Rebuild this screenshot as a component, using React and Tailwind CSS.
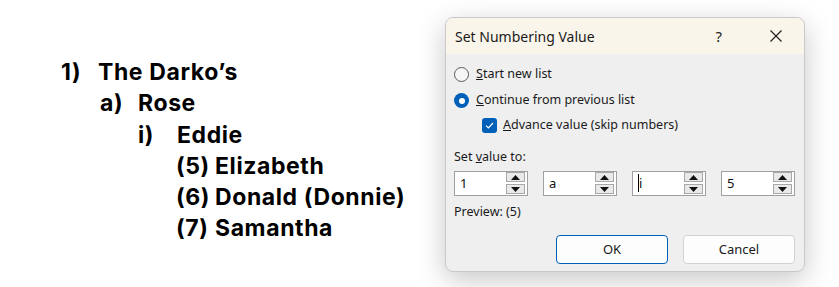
import React from 'react'

const items = [
  { pl: 'pl-[61px]', col: 'w-[37px]', n: '1)', t: 'The Darko’s' },
  { pl: 'pl-[100px]', col: 'w-[38px]', n: 'a)', t: 'Rose' },
  { pl: 'pl-[138px]', col: 'w-[39px]', n: 'i)', t: 'Eddie' },
  { pl: 'pl-[176px]', col: 'w-[39px]', n: '(5)', t: 'Elizabeth' },
  { pl: 'pl-[176px]', col: 'w-[39px]', n: '(6)', t: 'Donald (Donnie)' },
  { pl: 'pl-[176px]', col: 'w-[39px]', n: '(7)', t: 'Samantha' },
]

function Spinner() {
  return (
    <div className="flex flex-col gap-[2px] py-[1px] pr-[2px]">
      <div className="w-[19px] h-[10px] bg-[#e9e9e9] border border-[#a8a8a8] flex items-center justify-center">
        <svg width="9" height="5" viewBox="0 0 9 5"><path d="M0 5 L4.5 0 L9 5 Z" fill="#111" /></svg>
      </div>
      <div className="w-[19px] h-[10px] bg-[#e9e9e9] border border-[#a8a8a8] flex items-center justify-center">
        <svg width="9" height="5" viewBox="0 0 9 5"><path d="M0 0 L4.5 5 L9 0 Z" fill="#111" /></svg>
      </div>
    </div>
  )
}

function SpinBox({ value, caret }) {
  return (
    <div className="w-[74px] h-[25px] bg-white border border-[#a0a0a0] flex items-center justify-between">
      <span className="pl-[5px] text-[13px] text-[#111] leading-none">
        {caret ? <span className="border-l border-black">i</span> : value}
      </span>
      <Spinner />
    </div>
  )
}

export default function App() {
  return (
    <div className="w-[839px] h-[287px] bg-white flex overflow-hidden">

      {/* Lista */}
      <div className="flex-1 pt-[57px] font-['Inter',sans-serif] font-bold text-[23px] tracking-[0.6px] leading-[31.3px] text-black">
        {items.map((it, i) => (
          <div key={i} className={`flex ${it.pl}`}>
            <span className={it.col}>{it.n}</span>
            <span>{it.t}</span>
          </div>
        ))}
      </div>

      {/* Dialogo */}
      <div className="mt-[17px] mr-[34px] w-[360px] h-[255px] rounded-[8px] border border-[#c9c9c9] bg-[#efefef] overflow-hidden shadow-[0_8px_28px_rgba(0,0,0,0.22)] font-['Noto_Sans',sans-serif] text-[#1a1a1a] flex flex-col">
        <div className="h-[36px] bg-[#faf5ea] flex items-center pl-[9px] pr-[22px]">
          <span className="text-[14px] flex-1">Set Numbering Value</span>
          <span className="text-[15px] mr-[48px]">?</span>
          <svg width="12" height="12" viewBox="0 0 12 12"><path d="M0.5 0.5 L11.5 11.5 M11.5 0.5 L0.5 11.5" stroke="#222" strokeWidth="1.2" /></svg>
        </div>

        <div className="flex flex-col pl-[8px] pr-[9px] pt-[13px] text-[12.5px]">
          <label className="flex items-center gap-[7px] h-[15px]">
            <span className="w-[15px] h-[15px] rounded-full border border-[#5a5a5a] bg-[#f7f7f7]" />
            <span><span className="underline">S</span>tart new list</span>
          </label>
          <label className="flex items-center gap-[7px] h-[15px] mt-[11px]">
            <span className="w-[15px] h-[15px] rounded-full bg-[#005fb8] flex items-center justify-center">
              <span className="w-[6px] h-[6px] rounded-full bg-white" />
            </span>
            <span><span className="underline">C</span>ontinue from previous list</span>
          </label>
          <label className="flex items-center gap-[6px] h-[15px] mt-[10px] ml-[28px]">
            <span className="w-[15px] h-[15px] rounded-[3px] bg-[#005fb8] flex items-center justify-center">
              <svg width="9" height="7" viewBox="0 0 9 7"><path d="M1 3.6 L3.4 6 L8 1" fill="none" stroke="white" strokeWidth="1.2" /></svg>
            </span>
            <span><span className="underline">A</span>dvance value (skip numbers)</span>
          </label>

          <p className="mt-[18px] leading-none">Set <span className="underline">v</span>alue to:</p>
          <div className="flex justify-between mt-[7px]">
            <SpinBox value="1" />
            <SpinBox value="a" />
            <SpinBox caret />
            <SpinBox value="5" />
          </div>
          <p className="mt-[10px] leading-none">Preview: (5)</p>

          <div className="flex justify-end gap-[15px] mt-[17px]">
            <button className="w-[112px] h-[29px] rounded-[4px] border border-[#005fb8] bg-[#fdfdfd] text-[13px]">OK</button>
            <button className="w-[112px] h-[29px] rounded-[4px] border border-[#d2d2d2] bg-[#fdfdfd] text-[13px]">Cancel</button>
          </div>
        </div>
      </div>

    </div>
  )
}
